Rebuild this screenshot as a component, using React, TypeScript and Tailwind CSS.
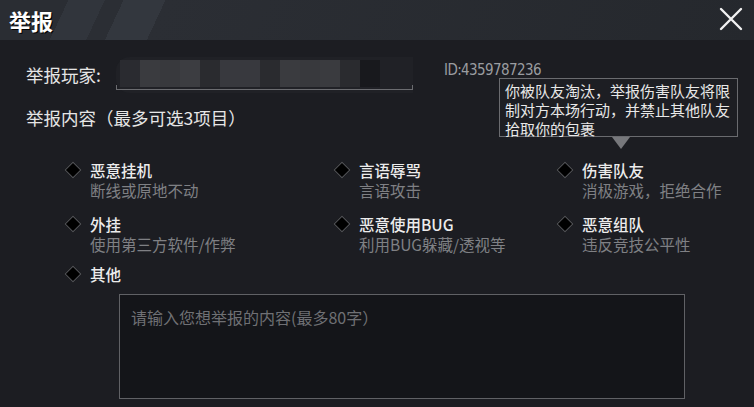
import React from "react";

const CJK = "font-['Noto_Sans_CJK_SC','Noto_Sans',sans-serif]";

/* --- mosaic blocks standing in for the blurred player name --- */
const mosaic = [
  "#2a2b30", "#3a3b3f", "#38393d", "#3c3d41", "#2a2b2f", "#38393e",
  "#38393e", "#2a2b2f", "#3a3b3f", "#38393d", "#3a3b3f", "#2a2b2f", "#18191d",
];

const options = [
  [
    { title: "恶意挂机", sub: "断线或原地不动" },
    { title: "言语辱骂", sub: "言语攻击" },
    { title: "伤害队友", sub: "消极游戏，拒绝合作" },
  ],
  [
    { title: "外挂", sub: "使用第三方软件/作弊" },
    { title: "恶意使用BUG", sub: "利用BUG躲藏/透视等" },
    { title: "恶意组队", sub: "违反竞技公平性" },
  ],
];

const Diamond = () => (
  <div className="w-[25px] h-[20px] flex items-center shrink-0">
    <div className="ml-[2px] w-[12px] h-[12px] rotate-45 bg-black border border-[#55565b]" />
  </div>
);

const Option = ({ title, sub }: { title: string; sub?: string }) => (
  <div className="flex">
    <Diamond />
    <div className="flex flex-col">
      <span className="text-[15.5px] leading-[20px] text-[#ececec] font-medium">{title}</span>
      {sub && <span className="text-[15.5px] leading-[20px] text-[#7f8084]">{sub}</span>}
    </div>
  </div>
);

export default function App() {
  return (
    <div className={`relative w-[754px] h-[407px] overflow-hidden bg-[#1c1d22] ${CJK}`}>
      {/* header */}
      <div className="h-[40px] flex items-center justify-between pl-[9px] pr-[11px] bg-[linear-gradient(115deg,#2a2d33_0px,#2a2d33_62px,#31353c_62px,#31353c_95px,#2b2e34_95px,#2b2e34_112px,#33373e_112px,#33373e_150px,#2b2e34_150px,#25282d_100%)]">
        <span className="text-[22px] leading-none font-bold text-white [text-shadow:1px_1px_0_#000]">举报</span>
        <svg width="24" height="24" viewBox="0 0 24 24" className="mt-[-2px]">
          <path d="M2 2 L22 22 M22 2 L2 22" stroke="#f2f2f2" strokeWidth="2.4" strokeLinecap="round" />
        </svg>
      </div>

      {/* player row */}
      <div className="mt-[17px] flex h-[36px]">
        <span className="ml-[26px] w-[90px] self-center text-[17.5px] text-[#e6e6e6]">举报玩家:</span>
        <div className="relative w-[297px] h-[36px] bg-[#202126] rounded-l-[14px]">
          <div className="absolute left-[4px] top-[3px] flex">
            {mosaic.map((c, i) => (
              <div key={i} className="w-[20px] h-[27px]" style={{ backgroundColor: c }} />
            ))}
          </div>
          <div className="absolute left-0 right-0 bottom-[3px] h-[5px] border-x border-b border-[#6b6c70]" />
        </div>
        <span className="ml-[31px] mt-[4px] text-[15px] leading-[18px] text-[#9a9ca0] font-['DejaVu_Sans_Condensed',sans-serif] tracking-[-0.6px]">
          ID:4359787236
        </span>
      </div>

      {/* content label */}
      <div className="mt-[13px] ml-[26px] text-[17.5px] leading-[24px] text-[#e6e6e6]">
        举报内容（最多可选3项目）
      </div>

      {/* options */}
      <div className="mt-[30px] pl-[65px] flex flex-col gap-[14px]">
        {options.map((row, r) => (
          <div key={r} className="grid grid-cols-[269px_223px_1fr]">
            {row.map((o) => (
              <Option key={o.title} title={o.title} sub={o.sub} />
            ))}
          </div>
        ))}
        <div className="-mt-[4px]">
          <Option title="其他" />
        </div>
      </div>

      {/* textarea */}
      <div className="mt-[10px] ml-[119px] w-[566px] h-[105px] border border-[#606165] bg-[#141519] px-[11px] pt-[10px]">
        <span className="text-[16px] leading-[24px] text-[#6f7074]">请输入您想举报的内容(最多80字）</span>
      </div>

      {/* tooltip */}
      <div className="absolute left-[499px] top-[78px] w-[239px]">
        <div className="h-[59px] border border-[#6a6b6f] bg-[#1e1f24]/95 pl-[5px] pt-[2px] text-[15px] leading-[19px] text-[#e8e8e8]">
          你被队友淘汰，举报伤害队友将限制对方本场行动，并禁止其他队友拾取你的包裹
        </div>
        <div className="ml-[113px] w-0 h-0 border-l-[9px] border-r-[9px] border-t-[12px] border-l-transparent border-r-transparent border-t-[#77787c]" />
      </div>
    </div>
  );
}
